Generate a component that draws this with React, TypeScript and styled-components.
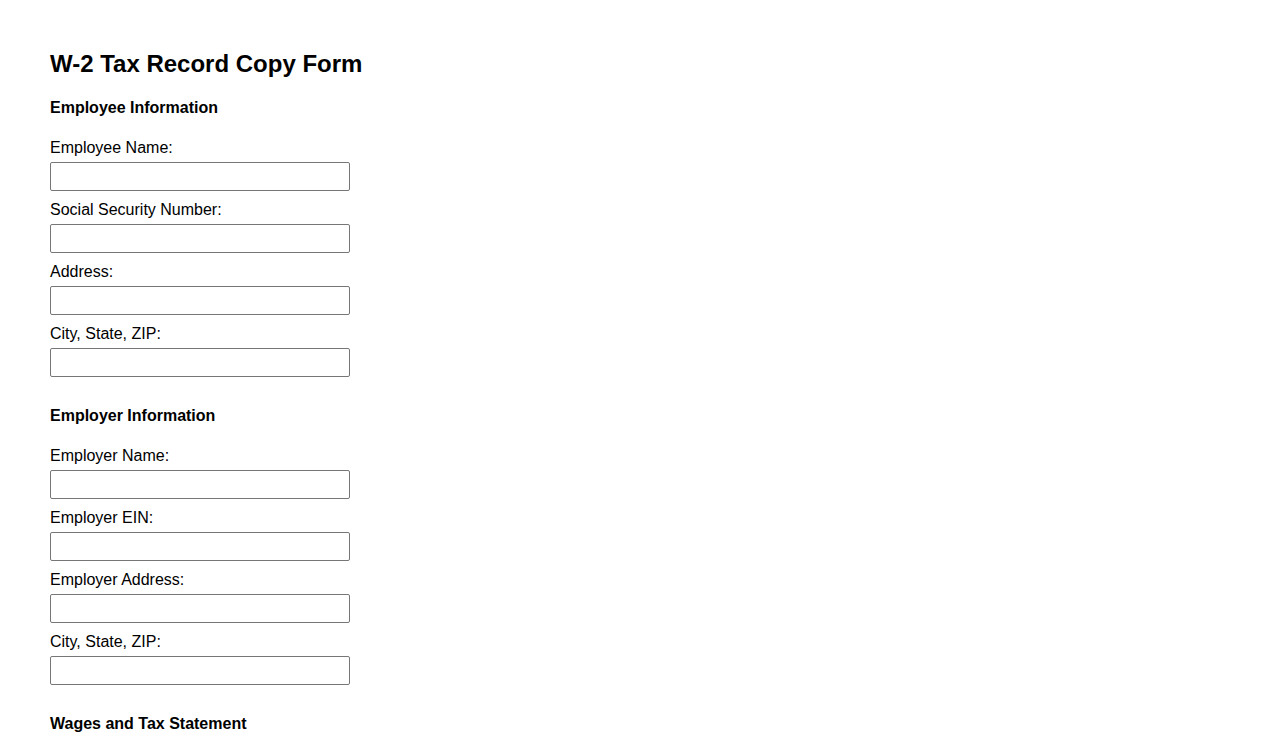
import React from 'react'
import styled, { createGlobalStyle } from 'styled-components'

const GlobalStyle = createGlobalStyle`
  html, body {
    margin: 0;
    padding: 0;
    background: #fff;
  }
  body {
    font-family: 'Liberation Sans', Arial, sans-serif;
    color: #000;
  }
`

const Page = styled.div`
  padding: 50px 50px 40px 50px;
`

const Title = styled.h2`
  font-size: 24px;
  font-weight: bold;
  margin: 0 0 21px 0;
  line-height: normal;
`

const Section = styled.section`
  display: flex;
  flex-direction: column;
  margin-bottom: 20px;
`

const SectionTitle = styled.h3`
  font-size: 16px;
  font-weight: bold;
  margin: 0 0 22px 0;
  line-height: normal;
`

const Field = styled.div`
  display: flex;
  flex-direction: column;
  align-items: flex-start;
  margin-bottom: 10px;
`

const Label = styled.label`
  font-size: 16px;
  line-height: 18px;
  margin-bottom: 5px;
`

const Input = styled.input`
  width: 300px;
  height: 29px;
  box-sizing: border-box;
  padding: 4px;
  font-family: 'Liberation Sans', Arial, sans-serif;
  font-size: 16px;
  border: 1px solid #767676;
  border-radius: 2px;
  background: #fff;
  margin: 0;
`

type Group = { title: string; fields: string[] }

const groups: Group[] = [
  {
    title: 'Employee Information',
    fields: ['Employee Name:', 'Social Security Number:', 'Address:', 'City, State, ZIP:'],
  },
  {
    title: 'Employer Information',
    fields: ['Employer Name:', 'Employer EIN:', 'Employer Address:', 'City, State, ZIP:'],
  },
  {
    title: 'Wages and Tax Statement',
    fields: [
      'Wages, Tips, Other Compensation:',
      'Federal Income Tax Withheld:',
      'Social Security Wages:',
      'Social Security Tax Withheld:',
    ],
  },
]

const App: React.FC = () => {
  return (
    <>
      <GlobalStyle />
      <Page>
        <Title>W-2 Tax Record Copy Form</Title>
        {groups.map((g, gi) => (
          <Section key={g.title}>
            <SectionTitle>{g.title}</SectionTitle>
            {g.fields.map((f, fi) => {
              const id = `f-${gi}-${fi}`
              return (
                <Field key={id}>
                  <Label htmlFor={id}>{f}</Label>
                  <Input id={id} type="text" />
                </Field>
              )
            })}
          </Section>
        ))}
      </Page>
    </>
  )
}

export default App
